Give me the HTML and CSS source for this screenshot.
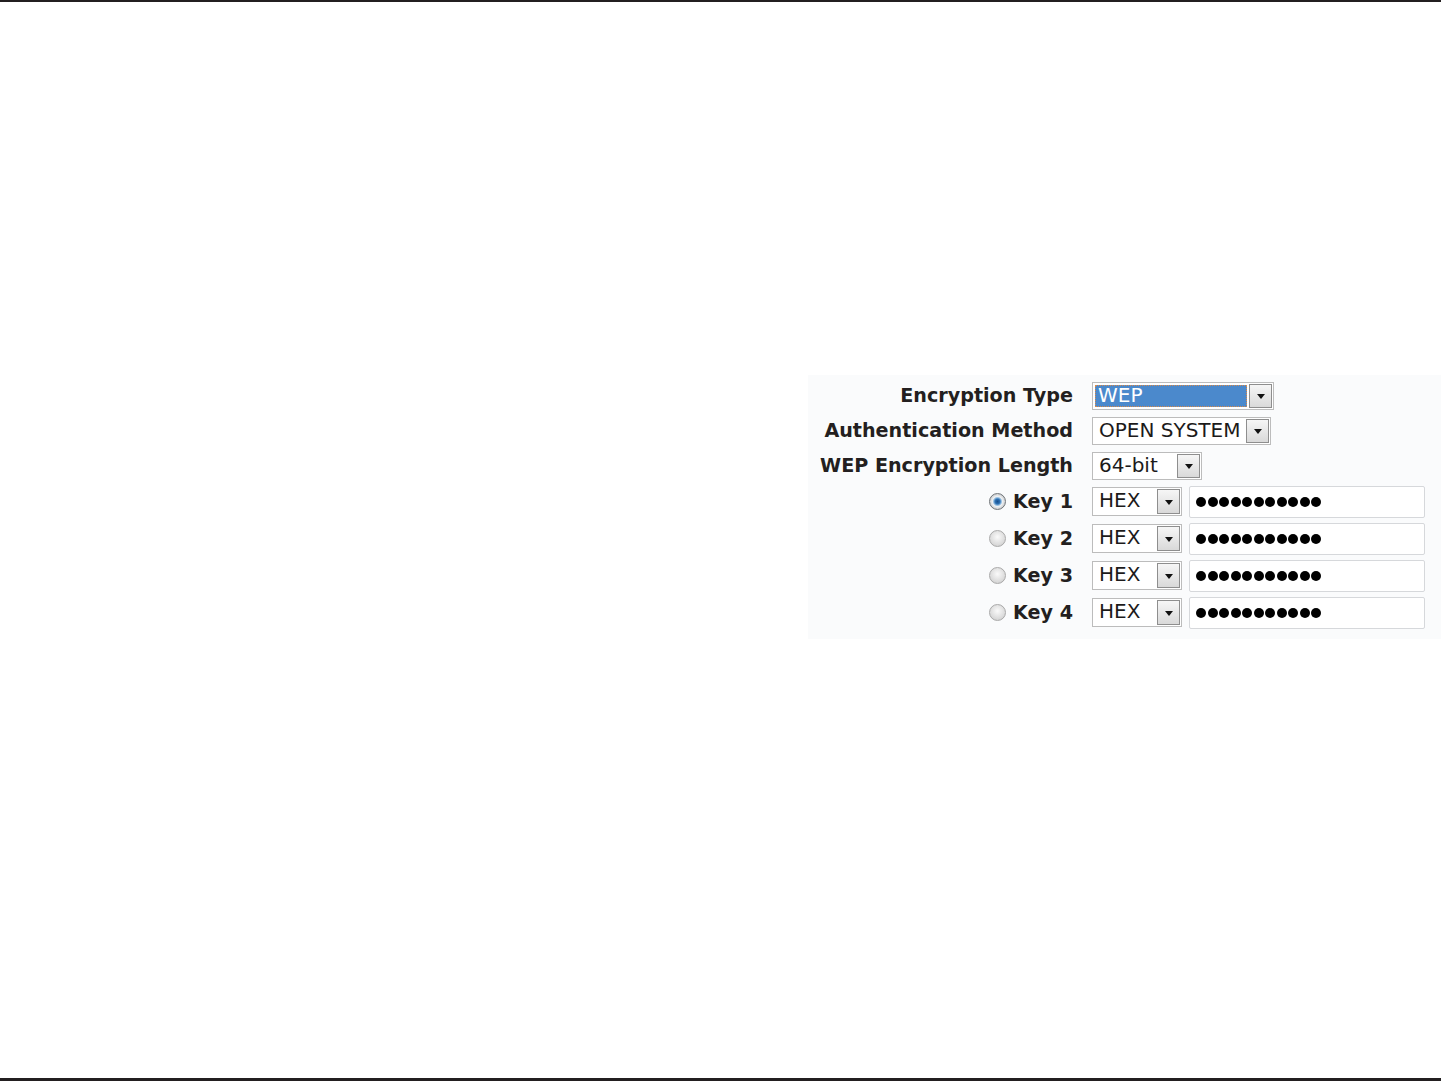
FILE: index.html
```html
<!DOCTYPE html>
<html lang="en">
<head>
<meta charset="utf-8">
<title>WEP Settings</title>
<link rel="stylesheet" href="styles.css">
</head>
<body>
<div class="page">
  <div class="rule-top"></div>
  <main class="main">
    <section class="panel">
      <div class="row">
        <div class="label">Encryption Type</div>
        <div class="select w182"><span class="value selected">WEP</span><span class="btn"><i class="tri"></i></span></div>
      </div>
      <div class="row">
        <div class="label">Authentication Method</div>
        <div class="select w179"><span class="value">OPEN SYSTEM</span><span class="btn"><i class="tri"></i></span></div>
      </div>
      <div class="row">
        <div class="label">WEP Encryption Length</div>
        <div class="select w110"><span class="value">64-bit</span><span class="btn"><i class="tri"></i></span></div>
      </div>
      <div class="row key">
        <div class="label"><span class="radio checked"></span>Key 1</div>
        <div class="select w90"><span class="value">HEX</span><span class="btn"><i class="tri"></i></span></div>
        <div class="pass"><i></i><i></i><i></i><i></i><i></i><i></i><i></i><i></i><i></i><i></i><i></i></div>
      </div>
      <div class="row key">
        <div class="label"><span class="radio"></span>Key 2</div>
        <div class="select w90"><span class="value">HEX</span><span class="btn"><i class="tri"></i></span></div>
        <div class="pass"><i></i><i></i><i></i><i></i><i></i><i></i><i></i><i></i><i></i><i></i><i></i></div>
      </div>
      <div class="row key">
        <div class="label"><span class="radio"></span>Key 3</div>
        <div class="select w90"><span class="value">HEX</span><span class="btn"><i class="tri"></i></span></div>
        <div class="pass"><i></i><i></i><i></i><i></i><i></i><i></i><i></i><i></i><i></i><i></i><i></i></div>
      </div>
      <div class="row key">
        <div class="label"><span class="radio"></span>Key 4</div>
        <div class="select w90"><span class="value">HEX</span><span class="btn"><i class="tri"></i></span></div>
        <div class="pass"><i></i><i></i><i></i><i></i><i></i><i></i><i></i><i></i><i></i><i></i><i></i></div>
      </div>
    </section>
  </main>
  <div class="rule-bottom"></div>
</div>
</body>
</html>
```
FILE: styles.css
```css
html, body {
  margin: 0;
  padding: 0;
  background: #ffffff;
}
.page {
  height: 1081px;
  display: flex;
  flex-direction: column;
  font-family: "DejaVu Sans", "Liberation Sans", sans-serif;
  color: #231f20;
}
.rule-top {
  height: 2px;
  background: #231f20;
}
.rule-bottom {
  height: 3px;
  background: #231f20;
}
.main {
  flex: 1;
}
.panel {
  margin-top: 373px;
  margin-left: 808px;
  padding: 3px 0 8px;
  background: #fafbfc;
}
.row {
  display: flex;
  align-items: center;
  height: 35px;
}
.row.key {
  height: 37px;
}
.label {
  width: 265px;
  margin-right: 19px;
  display: flex;
  justify-content: flex-end;
  align-items: center;
  font-weight: bold;
  font-size: 19.15px;
  color: #231f20;
  white-space: nowrap;
}
.select {
  box-sizing: border-box;
  height: 28px;
  display: flex;
  border: 1px solid #bcbcbc;
  background: #fff;
  padding: 1px;
}
.row.key .select {
  height: 29px;
}
.w182 { width: 182px; }
.w179 { width: 179px; }
.w110 { width: 110px; }
.w90 { width: 90px; }
.value {
  flex: 1;
  padding-left: 5px;
  font-size: 20px;
  line-height: 23px;
  color: #1c1a1a;
  white-space: nowrap;
}
.value.selected {
  background: #4b89cc;
  color: #fff;
  outline: 1px dotted #d98a4a;
  outline-offset: -1px;
  margin: 1px 2px 1px 1px;
  line-height: 21px;
  padding-left: 3px;
}
.btn {
  box-sizing: border-box;
  width: 23px;
  border: 1px solid #8e8e8e;
  background: linear-gradient(#f6f6f6, #d9d9d9);
  display: flex;
  align-items: center;
  justify-content: center;
}
.tri {
  width: 0;
  height: 0;
  border-left: 4.5px solid transparent;
  border-right: 4.5px solid transparent;
  border-top: 5px solid #111;
  margin-top: 1px;
}
.pass {
  box-sizing: border-box;
  width: 236px;
  height: 32px;
  margin-left: 7px;
  border: 1px solid #d6d8db;
  border-radius: 2px;
  background: #fff;
  display: flex;
  align-items: center;
  padding-left: 6px;
}
.pass i {
  width: 10px;
  height: 10px;
  border-radius: 50%;
  background: #000;
  margin-right: 1.5px;
}
.radio {
  box-sizing: border-box;
  width: 17px;
  height: 17px;
  border-radius: 50%;
  margin-right: 7px;
  border: 1px solid #a9a9a9;
  background: radial-gradient(circle at 50% 40%, #fafafa 0, #e4e4e4 45%, #c9c9c9 100%);
}
.radio.checked {
  border-color: #6f7478;
  background: radial-gradient(circle, #174f8c 0, #2d72b5 2.5px, #9cc3e4 4px, #eef0f2 5px, #d0d2d4 7.5px);
}
```
